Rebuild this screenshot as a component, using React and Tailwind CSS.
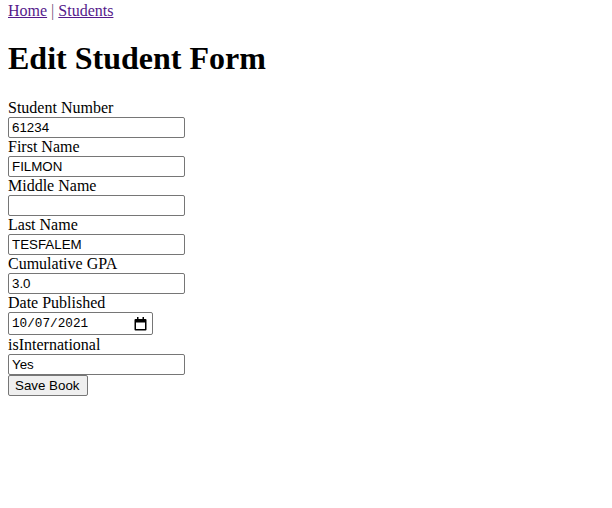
export default function App() {
  const fields = [
    { label: "Student Number", value: "61234" },
    { label: "First Name", value: "FILMON" },
    { label: "Middle Name", value: "" },
    { label: "Last Name", value: "TESFALEM" },
    { label: "Cumulative GPA", value: "3.0" },
  ];

  return (
    <div className="min-h-screen bg-white px-2 text-black font-['Liberation_Serif','Times_New_Roman',serif] text-[16px]">
      {/* nav */}
      <div className="h-[20px] pt-[2px] leading-[18px]">
        <a href="#" className="text-[#551a8b] underline">Home</a>
        <span className="text-[#6b4f7a]">{" | "}</span>
        <a href="#" className="text-[#551a8b] underline">Students</a>
      </div>

      <h1 className="mt-[20px] mb-[22px] h-[37px] leading-[37px] text-[32px] font-bold">Edit Student Form</h1>

      <form className="flex flex-col items-start">
        {fields.map((f) => (
          <div key={f.label} className="flex flex-col items-start">
            <label className="h-[18px] leading-[18px]">{f.label}</label>
            <input
              type="text"
              readOnly
              defaultValue={f.value}
              className="w-[177px] h-[21px] border border-[#767676] rounded-[2px] px-[3px] text-[13.33px] leading-[19px] text-black font-['Liberation_Sans',Arial,sans-serif] outline-none"
            />
          </div>
        ))}

        <label className="h-[18px] leading-[18px]">Date Published</label>
        <div className="w-[145px] h-[23px] border border-[#767676] rounded-[2px] pl-[3px] pr-[5px] flex items-center justify-between">
          <span className="text-[12.7px] font-['Liberation_Mono','Courier_New',monospace] leading-[20px]">10/07/2021</span>
          <svg width="13" height="14" viewBox="0 0 13 14" className="text-black">
            <rect x="3" y="0" width="1.5" height="2.5" fill="currentColor" />
            <rect x="8.5" y="0" width="1.5" height="2.5" fill="currentColor" />
            <path d="M1.5 2h10a1 1 0 0 1 1 1v9.5a1 1 0 0 1-1 1h-10a1 1 0 0 1-1-1V3a1 1 0 0 1 1-1zM2 5.5v6.5h9V5.5z" fill="currentColor" fillRule="evenodd" />
          </svg>
        </div>

        <label className="h-[18px] leading-[18px] mt-[1px]">isInternational</label>
        <input
          type="text"
          readOnly
          defaultValue="Yes"
          className="w-[177px] h-[21px] border border-[#767676] rounded-[2px] px-[3px] text-[13.33px] leading-[19px] text-black font-['Liberation_Sans',Arial,sans-serif] outline-none"
        />
        <button
          type="button"
          className="w-[80px] h-[21px] bg-[#efefef] border border-[#767676] rounded-[2px] px-[6px] text-[13.33px] leading-[19px] text-black font-['Liberation_Sans',Arial,sans-serif] text-left"
        >
          Save Book
        </button>
      </form>
    </div>
  );
}
